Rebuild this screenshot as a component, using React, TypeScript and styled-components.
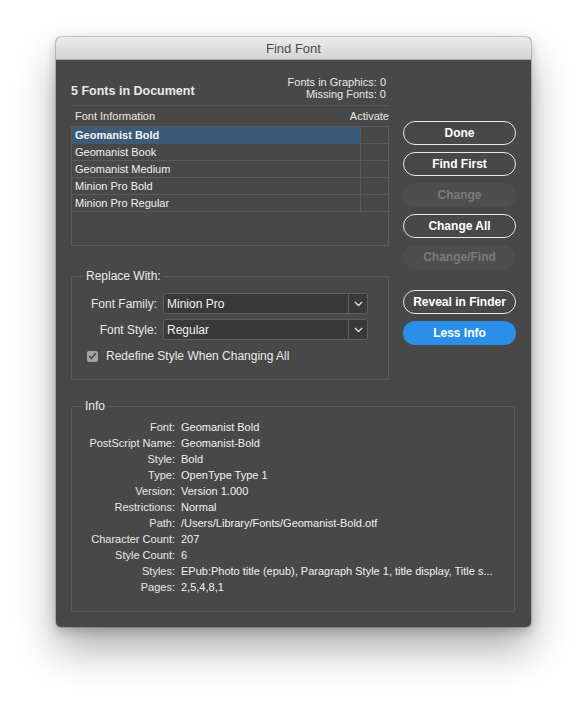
import React from "react";
import styled, { createGlobalStyle } from "styled-components";

const GlobalStyle = createGlobalStyle`
  html, body {
    margin: 0;
    padding: 0;
    background: #ffffff;
  }
  body {
    font-family: "Liberation Sans", Arial, sans-serif;
    -webkit-font-smoothing: antialiased;
  }
`;

const Page = styled.div`
  width: 587px;
  height: 701px;
  padding: 37px 0 0 56px;
  box-sizing: border-box;
`;

const Window = styled.div`
  width: 475px;
  height: 590px;
  border-radius: 5px;
  overflow: hidden;
  background: #484848;
  box-shadow: 0 0 0 1px rgba(0, 0, 0, 0.18), 0 22px 40px rgba(0, 0, 0, 0.32),
    0 4px 12px rgba(0, 0, 0, 0.2);
  display: flex;
  flex-direction: column;
`;

const TitleBar = styled.div`
  height: 22px;
  flex: none;
  background: linear-gradient(#ececec, #d4d4d4);
  border-bottom: 1px solid #a8a8a8;
  display: flex;
  align-items: center;
  justify-content: center;
  font-size: 13px;
  color: #4b4b4b;
`;

const Content = styled.div`
  padding: 0 15px 16px;
  color: #e8e8e8;
`;

const TopSection = styled.div`
  display: flex;
  gap: 14px;
`;

const LeftColumn = styled.div`
  width: 318px;
  display: flex;
  flex-direction: column;
`;

const Header = styled.div`
  margin-top: 16px;
  display: flex;
  justify-content: space-between;
  align-items: flex-end;
  padding-bottom: 5px;
  border-bottom: 1px solid #575757;
`;

const DocTitle = styled.div`
  font-size: 12.5px;
  font-weight: bold;
  line-height: 16px;
  margin-bottom: 1px;
`;

const Counts = styled.div`
  font-size: 11px;
  line-height: 12px;
  text-align: right;
  padding-right: 3px;
`;

const ColumnHeader = styled.div`
  height: 20px;
  display: flex;
  justify-content: space-between;
  align-items: center;
  font-size: 11px;
  padding-left: 4px;
`;

const Table = styled.div`
  height: 120px;
  box-sizing: border-box;
  border: 1px solid #5b5b5b;
`;

const Row = styled.div`
  display: grid;
  grid-template-columns: 289px 1fr;
  height: 17px;
  box-sizing: border-box;
  border-bottom: 1px solid #5a5a5a;
`;

const NameCell = styled.div<{ $selected?: boolean }>`
  background: ${(p) => (p.$selected ? "#3d5a76" : "transparent")};
  border-right: 1px solid #5a5a5a;
  padding-left: 3px;
  font-size: 11px;
  line-height: 17px;
  font-weight: ${(p) => (p.$selected ? "bold" : "normal")};
  color: #f2f2f2;
`;

const ActivateCell = styled.div``;

const Group = styled.fieldset<{ $legendOffset: number }>`
  margin: 0;
  padding: 8px 0 15px;
  border: 1px solid #5c5c5c;
  border-radius: 2px;
  min-width: 0;

  legend {
    margin-left: ${(p) => p.$legendOffset}px;
    padding: 0 3px;
    font-size: 12px;
    line-height: 14px;
    color: #ececec;
  }
`;

const ReplaceGroup = styled(Group)`
  margin-top: 23px;
  padding: 10px 0 15px;
  display: grid;
  grid-template-columns: 85px 205px;
  column-gap: 6px;
  row-gap: 5px;
  align-items: center;
`;

const FieldLabel = styled.label`
  font-size: 12px;
  text-align: right;
`;

const Select = styled.div`
  height: 21px;
  box-sizing: border-box;
  border: 1px solid #5f5f5f;
  border-radius: 2px;
  background: #393939;
  display: flex;
  align-items: center;
  font-size: 12px;
  color: #f2f2f2;
`;

const SelectValue = styled.span`
  flex: 1;
  padding-left: 3px;
`;

const SelectArrow = styled.span`
  width: 18px;
  height: 100%;
  border-left: 1px solid #5f5f5f;
  display: flex;
  align-items: center;
  justify-content: center;
`;

const CheckRow = styled.label`
  grid-column: 1 / -1;
  margin-top: 3px;
  padding-left: 15px;
  display: flex;
  align-items: center;
  gap: 8px;
  font-size: 12px;
  line-height: 16px;
`;

const CheckBox = styled.span`
  width: 11px;
  height: 11px;
  border-radius: 2px;
  background: #a3a3a3;
  display: flex;
  align-items: center;
  justify-content: center;
`;

const ButtonColumn = styled.div`
  width: 113px;
  padding-top: 61px;
  display: flex;
  flex-direction: column;
  gap: 7px;
`;

const Button = styled.button<{ $variant?: "outline" | "disabled" | "primary"; $spaced?: boolean }>`
  height: 24px;
  border-radius: 12px;
  box-sizing: border-box;
  font-family: "Liberation Sans", Arial, sans-serif;
  font-size: 12px;
  font-weight: bold;
  padding: 0;
  margin-top: ${(p) => (p.$spaced ? "14px" : "0")};
  border: ${(p) => (p.$variant === "outline" || !p.$variant ? "1.5px solid #e9e9e9" : "none")};
  background: ${(p) =>
    p.$variant === "primary" ? "#2b8fe9" : p.$variant === "disabled" ? "#4e4e4e" : "transparent"};
  color: ${(p) => (p.$variant === "disabled" ? "#7b7b7b" : "#ffffff")};
`;

const InfoGroup = styled(Group)`
  margin: 19px 1px 0 0;
  padding: 6px 0 16px;
  display: grid;
  grid-template-columns: 103px 1fr;
  column-gap: 6px;
`;

const InfoLabel = styled.div`
  font-size: 11px;
  line-height: 16px;
  text-align: right;
  color: #e8e8e8;
`;

const InfoValue = styled.div`
  font-size: 11px;
  line-height: 16px;
  color: #f2f2f2;
  white-space: nowrap;
`;

const Chevron = () => (
  <svg width="9" height="6" viewBox="0 0 9 6">
    <path d="M1 1 L4.5 4.5 L8 1" fill="none" stroke="#e0e0e0" strokeWidth="1.3" />
  </svg>
);

const fonts = ["Geomanist Bold", "Geomanist Book", "Geomanist Medium", "Minion Pro Bold", "Minion Pro Regular"];

const info: [string, string][] = [
  ["Font:", "Geomanist Bold"],
  ["PostScript Name:", "Geomanist-Bold"],
  ["Style:", "Bold"],
  ["Type:", "OpenType Type 1"],
  ["Version:", "Version 1.000"],
  ["Restrictions:", "Normal"],
  ["Path:", "/Users/Library/Fonts/Geomanist-Bold.otf"],
  ["Character Count:", "207"],
  ["Style Count:", "6"],
  ["Styles:", "EPub:Photo title (epub), Paragraph Style 1, title display, Title s..."],
  ["Pages:", "2,5,4,8,1"],
];

export default function App() {
  return (
    <>
      <GlobalStyle />
      <Page>
        <Window>
          <TitleBar>Find Font</TitleBar>
          <Content>
            <TopSection>
              <LeftColumn>
                <Header>
                  <DocTitle>5 Fonts in Document</DocTitle>
                  <Counts>
                    <div>Fonts in Graphics: 0</div>
                    <div>Missing Fonts: 0</div>
                  </Counts>
                </Header>
                <ColumnHeader>
                  <span>Font Information</span>
                  <span>Activate</span>
                </ColumnHeader>
                <Table>
                  {fonts.map((f, i) => (
                    <Row key={f}>
                      <NameCell $selected={i === 0}>{f}</NameCell>
                      <ActivateCell />
                    </Row>
                  ))}
                </Table>
                <ReplaceGroup $legendOffset={11}>
                  <legend>Replace With:</legend>
                  <FieldLabel>Font Family:</FieldLabel>
                  <Select>
                    <SelectValue>Minion Pro</SelectValue>
                    <SelectArrow>
                      <Chevron />
                    </SelectArrow>
                  </Select>
                  <FieldLabel>Font Style:</FieldLabel>
                  <Select>
                    <SelectValue>Regular</SelectValue>
                    <SelectArrow>
                      <Chevron />
                    </SelectArrow>
                  </Select>
                  <CheckRow>
                    <CheckBox>
                      <svg width="9" height="8" viewBox="0 0 9 8">
                        <path d="M1.2 4.2 L3.4 6.3 L7.8 1.3" fill="none" stroke="#4a4a4a" strokeWidth="1.6" />
                      </svg>
                    </CheckBox>
                    Redefine Style When Changing All
                  </CheckRow>
                </ReplaceGroup>
              </LeftColumn>
              <ButtonColumn>
                <Button>Done</Button>
                <Button>Find First</Button>
                <Button $variant="disabled">Change</Button>
                <Button>Change All</Button>
                <Button $variant="disabled">Change/Find</Button>
                <Button $spaced>Reveal in Finder</Button>
                <Button $variant="primary">Less Info</Button>
              </ButtonColumn>
            </TopSection>
            <InfoGroup $legendOffset={10}>
              <legend>Info</legend>
              {info.map(([k, v]) => (
                <React.Fragment key={k}>
                  <InfoLabel>{k}</InfoLabel>
                  <InfoValue>{v}</InfoValue>
                </React.Fragment>
              ))}
            </InfoGroup>
          </Content>
        </Window>
      </Page>
    </>
  );
}
